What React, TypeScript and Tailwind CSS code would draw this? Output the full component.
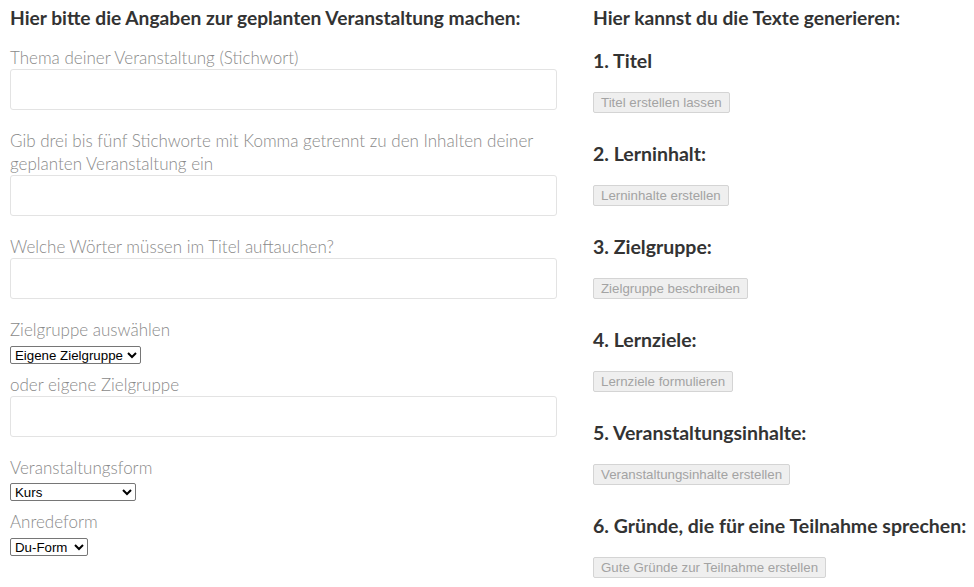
const labelFont = "font-['Lato','Liberation_Sans',sans-serif]"

function Label({ children }: { children: React.ReactNode }) {
  return <div className={`${labelFont} text-[17px] font-light leading-[23px] text-[#8a8a8a]`}>{children}</div>
}

function TextField() {
  return <input type="text" className="block h-[41px] w-full rounded-[3px] border border-[#e3e3e3] bg-white px-2" />
}

function Select({ width, options }: { width: string; options: string[] }) {
  return (
    <select
      className={`${width} block h-[18px] rounded-[2px] border border-[#767676] bg-white font-['Liberation_Sans',Arial,sans-serif] text-[13.3px] leading-[16px] text-black`}
      style={{ appearance: "auto" }}
    >
      {options.map((o) => (
        <option key={o}>{o}</option>
      ))}
    </select>
  )
}

const sections = [
  { title: "1. Titel", button: "Titel erstellen lassen" },
  { title: "2. Lerninhalt:", button: "Lerninhalte erstellen" },
  { title: "3. Zielgruppe:", button: "Zielgruppe beschreiben" },
  { title: "4. Lernziele:", button: "Lernziele formulieren" },
  { title: "5. Veranstaltungsinhalte:", button: "Veranstaltungsinhalte erstellen" },
  { title: "6. Gründe, die für eine Teilnahme sprechen:", button: "Gute Gründe zur Teilnahme erstellen" },
]

export default function App() {
  return (
    <div className={`${labelFont} grid min-h-screen grid-cols-[547px_1fr] gap-[36px] bg-white px-[10px] pt-[6px] text-[#333]`}>
      {/* linke Spalte: Angaben */}
      <div className="flex flex-col">
        <h2 className="whitespace-nowrap text-[19.2px] font-bold leading-[24px] text-[#333]">
          Hier bitte die Angaben zur geplanten Veranstaltung machen:
        </h2>

        <div className="mt-[16px]">
          <Label>Thema deiner Veranstaltung (Stichwort)</Label>
          <TextField />
        </div>

        <div className="mt-[19px]">
          <Label>
            Gib drei bis fünf Stichworte mit Komma getrennt zu den Inhalten deiner
            <br />
            geplanten Veranstaltung ein
          </Label>
          <TextField />
        </div>

        <div className="mt-[19px]">
          <Label>Welche Wörter müssen im Titel auftauchen?</Label>
          <TextField />
        </div>

        <div className="mt-[19px]">
          <Label>Zielgruppe auswählen</Label>
          <div className="mt-[5px]">
            <Select width="w-[131px]" options={["Eigene Zielgruppe"]} />
          </div>
        </div>

        <div className="mt-[9px]">
          <Label>oder eigene Zielgruppe</Label>
          <TextField />
        </div>

        <div className="mt-[19px]">
          <Label>Veranstaltungsform</Label>
          <div className="mt-[4px]">
            <Select width="w-[126px]" options={["Kurs"]} />
          </div>
        </div>

        <div className="mt-[9px]">
          <Label>Anredeform</Label>
          <div className="mt-[5px]">
            <Select width="w-[78px]" options={["Du-Form"]} />
          </div>
        </div>
      </div>

      {/* rechte Spalte: Texte generieren */}
      <div className="flex flex-col">
        <h2 className="whitespace-nowrap text-[19.2px] font-bold leading-[24px] text-[#333]">
          Hier kannst du die Texte generieren:
        </h2>
        {sections.map((s, i) => (
          <div key={s.title} className={i === 0 ? "mt-[18px]" : "mt-[28px]"}>
            <h3 className="whitespace-nowrap text-[19.5px] font-bold leading-[26px] text-[#333]">{s.title}</h3>
            <button
              disabled
              className="mt-[18px] block h-[21px] rounded-[2px] border border-[#d4d4d4] bg-[#efefef] px-[7px] font-['Liberation_Sans',Arial,sans-serif] text-[13.3px] leading-[18px] text-[#a3a3a3]"
            >
              {s.button}
            </button>
          </div>
        ))}
      </div>
    </div>
  )
}
